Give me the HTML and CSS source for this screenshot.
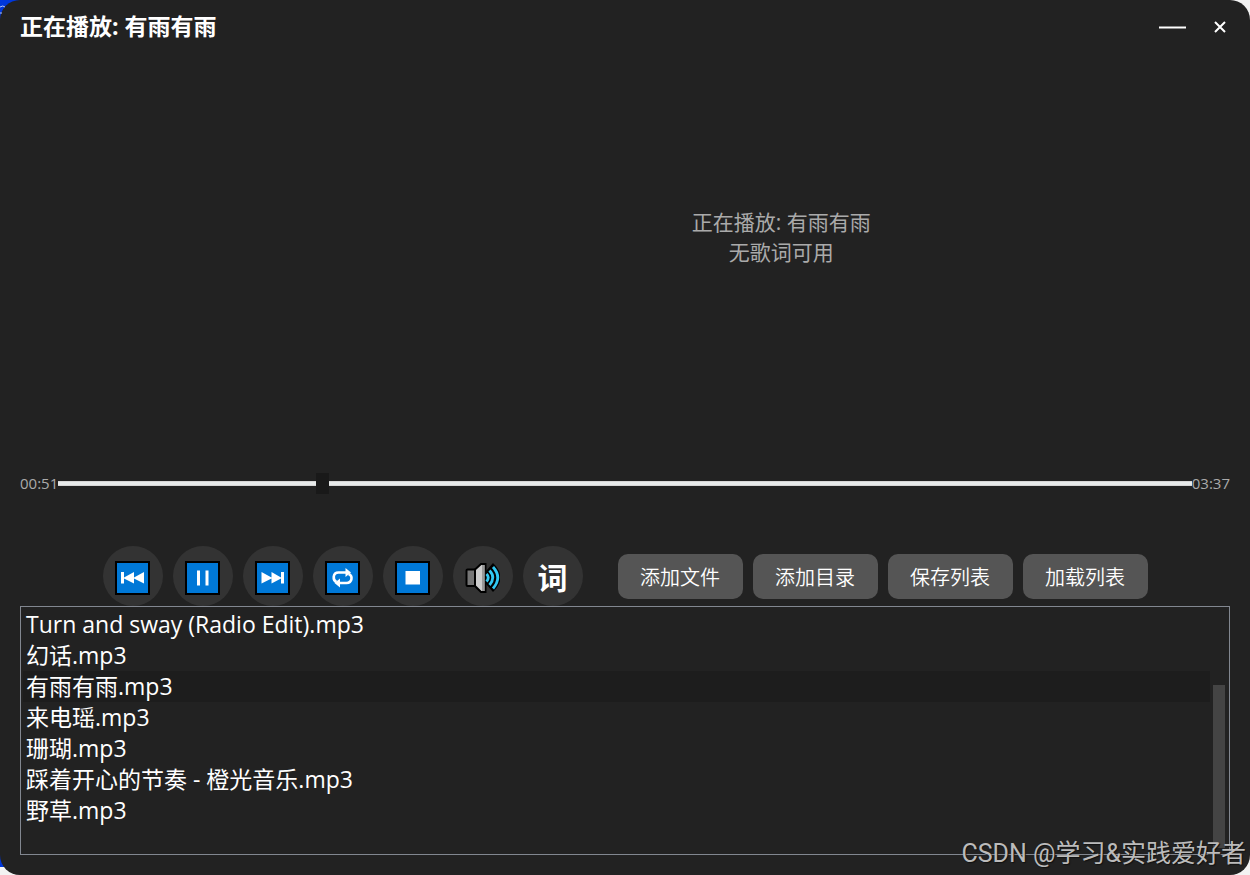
FILE: index.html
```html
<!DOCTYPE html>
<html lang="zh-CN">
<head>
    <meta charset="UTF-8">
    <meta name="viewport" content="width=device-width, initial-scale=1.0">
    <title>音乐播放器</title>
    <link rel="stylesheet" href="styles.css">
</head>
<body>

<svg class="desktop-mark" viewBox="0 0 8 16" aria-hidden="true">
    <path d="M0 7 Q3 5 5 7 M0 13 H2" fill="none" stroke="#b9c8f5"/>
</svg>

<div class="player">
    <header class="title-bar">
        <h1>正在播放: 有雨有雨</h1>
        <div class="window-buttons">
            <button type="button" aria-label="最小化">
                <svg width="28" height="20" viewBox="0 0 28 20"><path d="M0 10.5H27" stroke="#fff" stroke-width="2"/></svg>
            </button>
            <button type="button" aria-label="关闭">
                <svg width="12" height="20" viewBox="0 0 12 20"><path d="M1 5L11 15M11 5L1 15" stroke="#fff" stroke-width="2"/></svg>
            </button>
        </div>
    </header>

    <main class="stage">
        <div class="cover"></div>
        <div class="lyrics">
            <p>正在播放: 有雨有雨</p>
            <p>无歌词可用</p>
        </div>
    </main>

    <div class="progress">
        <span>00:51</span>
        <input type="range" min="0" max="217" value="50" aria-label="播放进度">
        <span>03:37</span>
    </div>

    <div class="controls">
        <div class="round-group">
            <button type="button" class="round" aria-label="上一首">
                <svg width="35" height="34" viewBox="0 0 35 34">
                    <rect x="1" y="1" width="33" height="32" fill="#0078d7" stroke="#000" stroke-width="2"/>
                    <path d="M6 11H9V16.5L19 11V16.5L29 11V22.5L19 17.5V22.5L9 17.5V22.5H6Z" fill="#fff"/>
                </svg>
            </button>
            <button type="button" class="round" aria-label="暂停">
                <svg width="35" height="34" viewBox="0 0 35 34">
                    <rect x="1" y="1" width="33" height="32" fill="#0078d7" stroke="#000" stroke-width="2"/>
                    <path d="M12 9.5H15V24.5H12ZM20.5 9.5H23.5V24.5H20.5Z" fill="#fff"/>
                </svg>
            </button>
            <button type="button" class="round" aria-label="下一首">
                <svg width="35" height="34" viewBox="0 0 35 34">
                    <rect x="1" y="1" width="33" height="32" fill="#0078d7" stroke="#000" stroke-width="2"/>
                    <path d="M29 11H26V16.5L16.5 11V16.5L6.5 11V22.5L16.5 17.5V22.5L26 17.5V22.5H29Z" fill="#fff"/>
                </svg>
            </button>
            <button type="button" class="round" aria-label="循环播放">
                <svg width="35" height="34" viewBox="0 0 35 34">
                    <rect x="1" y="1" width="33" height="32" fill="#0078d7" stroke="#000" stroke-width="2"/>
                    <path d="M11.5 21C7.5 19.5 7.5 11.5 13.5 11.5H22M23.5 13C28 14.5 27.5 22 21.5 22H14" fill="none" stroke="#fff" stroke-width="2.6"/>
                    <path d="M20.5 7L26 11.5L20.5 16ZM15 17.5L9.5 22L15 26.5Z" fill="#fff"/>
                </svg>
            </button>
            <button type="button" class="round" aria-label="停止">
                <svg width="35" height="34" viewBox="0 0 35 34">
                    <rect x="1" y="1" width="33" height="32" fill="#0078d7" stroke="#000" stroke-width="2"/>
                    <path d="M10.5 10H25V23.5H10.5Z" fill="#fff"/>
                </svg>
            </button>
            <button type="button" class="round" aria-label="音量">
                <svg width="35" height="34" viewBox="0 0 35 34">
                    <path d="M1.5 9.5Q1.5 8.5 2.5 8.5H11V25H2.5Q1.5 25 1.5 24Z" fill="#767676" stroke="#000" stroke-width="2"/>
                    <path d="M10 8.5L16 3H20.5V31H16L10 25Z" fill="#ccc" stroke="#000" stroke-width="2"/>
                    <path d="M17 4H19.5V30H17Z" fill="#999"/>
                    <path d="M21 10L28 2Q43 16.5 28 31L21 23Z" fill="#000"/>
                    <path d="M21.5 13Q25 16.5 21.5 20.5M24.5 9.5Q31 16.5 24.5 24M28 6Q37.5 16.5 28 27.5" fill="none" stroke="#31c8f2" stroke-width="2.8"/>
                </svg>
            </button>
            <button type="button" class="round word">词</button>
        </div>
        <div class="text-group">
            <button type="button" class="text-button">添加文件</button>
            <button type="button" class="text-button">添加目录</button>
            <button type="button" class="text-button">保存列表</button>
            <button type="button" class="text-button">加载列表</button>
        </div>
    </div>

    <div class="playlist">
        <ul>
            <li>Turn and sway (Radio Edit).mp3</li>
            <li>幻话.mp3</li>
            <li class="current">有雨有雨.mp3</li>
            <li>来电瑶.mp3</li>
            <li>珊瑚.mp3</li>
            <li>踩着开心的节奏 - 橙光音乐.mp3</li>
            <li>野草.mp3</li>
        </ul>
        <div class="scrollbar"><div class="scroll-thumb"></div></div>
    </div>
</div>

<div class="watermark">CSDN @学习&amp;实践爱好者</div>

</body>
</html>
```

FILE: styles.css
```css
* {
    box-sizing: border-box;
}
body {
    margin: 0;
    color: #fff;
    font-family: "Open Sans", "Noto Sans CJK SC", sans-serif;
    background: linear-gradient(#0037da, #0037da) left top / 30px calc(100% - 8px) no-repeat, #f3f3f3;
}
button {
    padding: 0;
    border: none;
    background: none;
    color: #fff;
    font-family: inherit;
    cursor: pointer;
}
svg {
    display: block;
}
.player {
    min-height: 100vh;
    padding: 0 20px 20px;
    display: flex;
    flex-direction: column;
    background-color: #222;
    border-radius: 20px;
}
.title-bar {
    height: 54px;
    display: flex;
    justify-content: space-between;
    align-items: center;
}
.title-bar h1 {
    margin: 0;
    padding-bottom: 2px;
    font-size: 23px;
    font-weight: bold;
    line-height: 52px;
}
.window-buttons {
    display: flex;
    gap: 27px;
    padding-right: 4px;
}
.stage {
    flex: 1;
    display: flex;
    gap: 10px;
}
.cover {
    width: 25%;
}
.lyrics {
    flex: 1;
    display: flex;
    flex-direction: column;
    justify-content: center;
    padding-bottom: 52px;
    text-align: center;
    font-size: 21px;
    line-height: 30px;
    color: #aaa;
}
.lyrics p {
    margin: 0;
}
.progress {
    height: 22px;
    margin-bottom: 52px;
    display: flex;
    align-items: center;
    font-size: 15px;
    line-height: 22px;
    color: #aaa;
}
.progress input {
    flex: 1;
    min-width: 0;
    height: 22px;
    margin: 0;
    appearance: none;
    background: none;
}
.progress input::-webkit-slider-runnable-track {
    height: 5px;
    background-color: #e7eaea;
    border-top: 1px solid #d6d6d6;
    border-bottom: 1px solid #d6d6d6;
}
.progress input::-webkit-slider-thumb {
    appearance: none;
    width: 13px;
    height: 21px;
    margin-top: -9px;
    background-color: #191919;
}
.controls {
    display: flex;
    justify-content: center;
    align-items: center;
    gap: 35px;
}
.round-group,
.text-group {
    display: flex;
    gap: 10px;
}
.round {
    width: 60px;
    height: 60px;
    padding-top: 4px;
    display: flex;
    justify-content: center;
    align-items: center;
    border-radius: 50%;
    background-color: #333;
}
.word {
    font-size: 30px;
    font-weight: bold;
    line-height: 40px;
}
.text-button {
    width: 125px;
    height: 45px;
    border-radius: 10px;
    background-color: #555;
    font-size: 20px;
    font-weight: 350;
}
.playlist {
    display: flex;
    gap: 3px;
    padding: 2px 4px 6px 2px;
    border: 1px solid #828790;
}
.playlist ul {
    flex: 1;
    margin: 0;
    padding: 0 0 22px;
    list-style: none;
    font-size: 23px;
    line-height: 31px;
}
.playlist li {
    padding-left: 3px;
}
.current {
    background-color: #1d1d1d;
}
.scrollbar {
    width: 12px;
    display: flex;
    align-items: flex-end;
}
.scroll-thumb {
    width: 100%;
    height: 68%;
    background-color: #444;
}
.desktop-mark {
    position: absolute;
    left: 0;
    top: 0;
    width: 8px;
    height: 16px;
}
.watermark {
    position: absolute;
    right: 4px;
    bottom: 3px;
    font-family: Roboto, "Noto Sans CJK SC", sans-serif;
    font-size: 25px;
    line-height: 36px;
    color: #bbb;
    text-shadow: 1px 1px 1px #111;
}
```
